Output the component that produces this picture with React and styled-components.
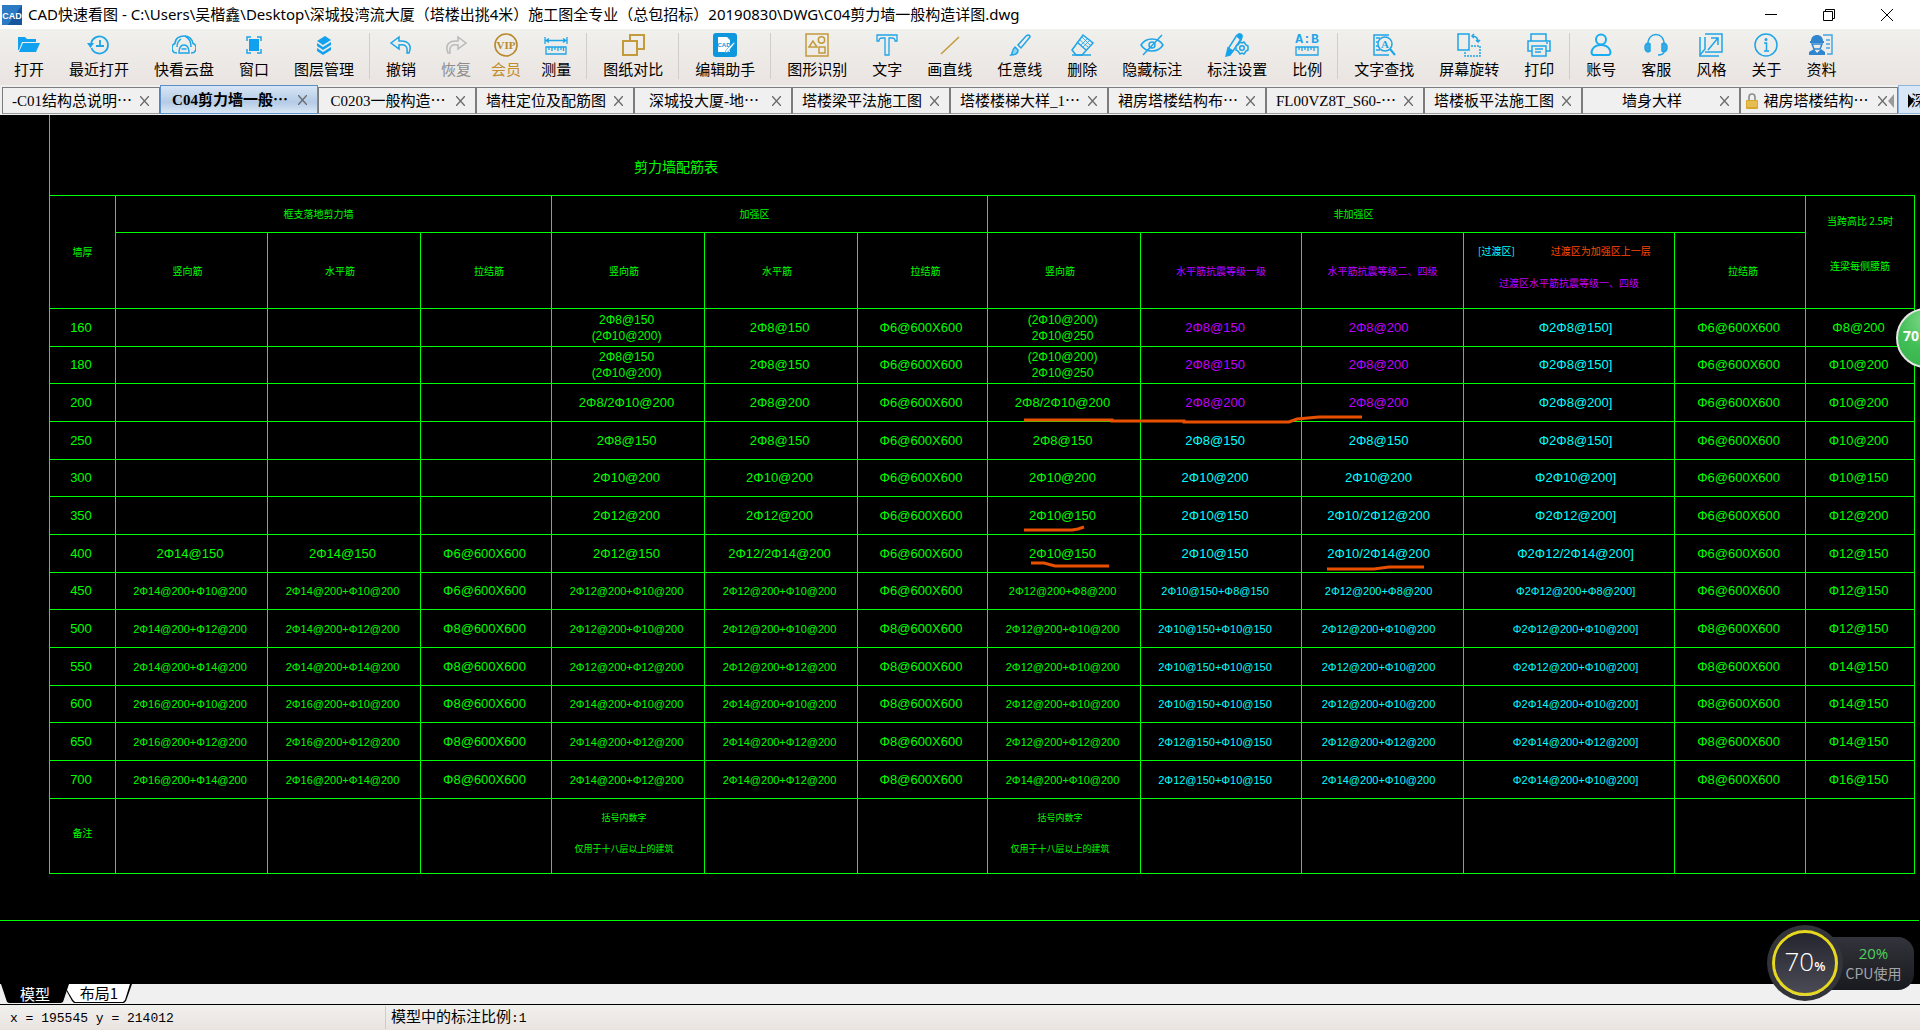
import React, { useState } from 'react'
import styled, { createGlobalStyle, css } from 'styled-components';

const BLUE = '#1ea5e8';
const GOLD = '#c39b3c';
const GREEN = '#00ff00';
const CYAN = '#00ffff';
const PURPLE = '#bf00ff';
const ORANGE = '#ff4800';

const line = { fill: 'none', stroke: BLUE, strokeWidth: 1.5 };

// toolbar drawings, all on a 24 x 24 grid
const icons = {
	open: (
		<g fill="#12a1ee">
			<path d="M1 4h7l2 2h9v3H5L2 17H1z" />
			<path d="M6 10h17l-4 9H2z" />
		</g>
	),
	recent: (
		<g {...line} strokeWidth="1.8">
			<path d="M4.5 15A8.500 8.500 0 1 0 4.200 10" />
			<path d="M13 7v6h-4M13 13h4" />
			<path d="M0 10h7l-3.500 5z" fill={BLUE} stroke="none" />
		</g>
	),
	cloud: (
		<g {...line}>
			<path d="M5 20c-3 0-5-2-5-5 0-2.500 1.500-4 3-4.500C3 5 8 3 12 3c5 0 8 3 9 7.500 2 .5 3 2 3 4.500 0 3-2 5-5 5" />
			<path d="M9 6c-3 2-4 5-4 8M13 3c4 2 6 6 6 11" />
			<path d="M7 20c0-5 2-8 5-8s5 3 5 8zM9.500 16h5" />
		</g>
	),
	window: (
		<g {...line}>
			<path d="M5 8V4h4M15 4h4v4M19 16v4h-4M9 20H5v-4" />
			<rect x="7" y="6" width="10" height="12" fill="#12a1ee" stroke="none" />
		</g>
	),
	layers: (
		<g fill="#12a1ee">
			<path d="M13 3l6 4-8 5-6-4z" />
			<path d="M5 10l6 4 8-5v3l-8 5-6-4z" />
			<path d="M5 15l6 4 8-5v3l-8 5-6-4z" />
		</g>
	),
	undo: <path {...line} d="M10 4L2 10l8 6v-4c6-1 9 1 8 8h2c3-7 0-13-10-12z" />,
	redo: <path {...line} stroke="#b9b9b9" d="M14 4l8 6-8 6v-4c-6-1-9 1-8 8H4c-3-7 0-13 10-12z" />,
	vip: (
		<g>
			<circle cx="12" cy="12" r="11" fill="none" stroke="#b8892c" strokeWidth="1.600" />
			<text x="12" y="16" fontSize="11" fontWeight="700" textAnchor="middle" fill="#b8892c" fontFamily="Liberation Serif, serif">VIP</text>
		</g>
	),
	measure: (
		<g {...line} strokeWidth="1.300">
			<path d="M1 4v7M23 4v7M3 7.500h18M5 5.500l-3 2 3 2M19 5.500l3 2-3 2" />
			<path d="M2 14h20v7H2zM5 14v3M8 14v4M11 14v3M14 14v4M17 14v3M19.500 14v4" />
		</g>
	),
	compare: (
		<g fill="none" stroke={GOLD} strokeWidth="2">
			<path d="M9 8V2h14v14h-7" />
			<path d="M2 8h14v14H2z" />
		</g>
	),
	helper: (
		<g>
			<rect width="24" height="24" rx="3" fill="#0e97dc" />
			<path d="M5 4h9l3 3v12H5z" fill="#fff" />
			<text x="11" y="14" fontSize="6" fontWeight="700" textAnchor="middle" fill="#0e97dc" fontFamily="Liberation Sans, sans-serif">CAD</text>
			<path d="M21 9l1 1-7 9-3 1 1-3z" fill="#fff" stroke="#0e97dc" strokeWidth=".6" />
		</g>
	),
	shapes: (
		<g fill="none" stroke={GOLD} strokeWidth="1.500">
			<path d="M1 1h22v22H1z" />
			<path d="M8 8l-4 6h8z" />
			<circle cx="16.500" cy="7" r="3.200" />
			<path d="M14 14h6v6h-6z" />
		</g>
	),
	text: <path {...line} strokeWidth="1.300" d="M2 2h20v6h-2c0-2-1-3-3-3h-3v17h-4V5H7C5 5 4 6 4 8H2z" />,
	straight: <path d="M3 21L21 4" stroke={GOLD} strokeWidth="1.600" />,
	brush: (
		<g {...line}>
			<path d="M20 2c1 0 2 1 2 2L13 15l-3-3L18 3z" />
			<path d="M7 14l3 3c0 3-2 5-7 5 2-2 1-6 4-8z" fill="#8fd2f4" />
		</g>
	),
	eraser: (
		<g {...line}>
			<path d="M13 2l10 8-11 12H6l-4-5z" />
			<path d="M7 9l9 8M2 22h19" />
			<path d="M12 4l8 8M10 7l8 7M17 6l-6 6M19 8l-6 6" strokeWidth=".8" />
		</g>
	),
	hide: (
		<g {...line}>
			<path d="M1 12c5-8 17-8 22 0-5 8-17 8-22 0z" />
			<circle cx="12" cy="12" r="3" />
			<path d="M3 22L22 2" />
		</g>
	),
	dimension: (
		<g {...line}>
			<path d="M3 16L12 2M8 18l8-12" />
			<path d="M12 3c1-4 6-2 5 1l-1 3zM3 15l5 3-3 4-4 1z" fill="#12a1ee" />
			<path d="M15 9l2 1 2-1 2 3 2 1v4l-2 1-2 3-2-1-2 1-2-3-2-1v-4l2-1z" fill="#edebe8" />
			<circle cx="17" cy="15" r="2.300" />
		</g>
	),
	ratio: (
		<g {...line} strokeWidth="1.300">
			<text x="12" y="10" fontSize="13" fontWeight="700" textAnchor="middle" fill={BLUE} stroke="none" fontFamily="Liberation Mono, monospace">A:B</text>
			<path d="M1 14h22v8H1zM4 14v3M7 14v4M10 14v3M13 14v4M16 14v3M19 14v4" />
		</g>
	),
	find: (
		<g {...line}>
			<path d="M17 2H2v20h15" />
			<path d="M4 5h4M4 9h2M4 13h2M4 17h4" />
			<circle cx="13" cy="11" r="7" />
			<path d="M18 16l5 6" strokeWidth="2" />
			<text x="13" y="15" fontSize="11" fontWeight="700" textAnchor="middle" fill={BLUE} stroke="none" fontFamily="Liberation Serif, serif">A</text>
		</g>
	),
	rotate: (
		<g {...line}>
			<path d="M1 1h11v16H1z" />
			<path d="M15 3c4 0 6 2 6 6M17 1l-2 2 2 2M19 7l2 2 2-2" />
			<path d="M14 13h9v10H8v-4" strokeDasharray="2 1" />
		</g>
	),
	print: (
		<g {...line}>
			<path d="M4 8V1h15v7" />
			<path d="M5 18H1V8h22v10h-4" />
			<path d="M5 13h14v10H5zM8 16h8M8 19h6M19 10h2" />
		</g>
	),
	account: (
		<g {...line} stroke="#17acf3" strokeWidth="2">
			<circle cx="12" cy="6.500" r="5" />
			<path d="M4 22c-3-2-1-10 8-10s11 8 8 10z" />
		</g>
	),
	service: (
		<g {...line}>
			<path d="M4 12C3-2 21-2 20 12" />
			<path d="M4 10c-4 1-4 8 0 9l2-1v-7zM20 10c4 1 4 8 0 9l-2-1v-7z" fill="#3ba9e2" />
			<path d="M20 18c0 3-2 4-6 4" />
		</g>
	),
	style: (
		<g {...line}>
			<path d="M6 1h17v18H6M1 4v19h19" />
			<path d="M6 4v12L1 22" />
			<path d="M9 17L19 5M12 5h7v7" />
		</g>
	),
	about: (
		<g {...line}>
			<circle cx="12" cy="12" r="11" />
			<path d="M10 10h2.500v8M10 18h5" />
			<circle cx="12" cy="6.500" r=".8" fill={BLUE} />
		</g>
	),
	material: (
		<g fill="#2f86cf">
			<path d="M2 8c0-8 12-8 12 0h1v2H1V8z" />
			<path d="M3 11h10l-2 5H5z" fill="none" stroke="#2f86cf" strokeWidth="1.500" />
			<path d="M0 22v-3l5-3 3 4 4-4 4 3v3z" />
			<path d="M14 2h9v19h-5M17 7h4M17 11h4M17 15h4" fill="none" stroke="#45a5e2" strokeWidth="1.500" />
		</g>
	),
};

const toolGroups = [
	[['open', '打开'], ['recent', '最近打开'], ['cloud', '快看云盘'], ['window', '窗口'], ['layers', '图层管理']],
	[['undo', '撤销'], ['redo', '恢复'], ['vip', '会员'], ['measure', '测量']],
	[['compare', '图纸对比']],
	[['helper', '编辑助手']],
	[['shapes', '图形识别'], ['text', '文字'], ['straight', '画直线'], ['brush', '任意线'], ['eraser', '删除'], ['hide', '隐藏标注'], ['dimension', '标注设置'], ['ratio', '比例']],
	[['find', '文字查找'], ['rotate', '屏幕旋转'], ['print', '打印']],
	[['account', '账号'], ['service', '客服'], ['style', '风格'], ['about', '关于'], ['material', '资料']],
];

const files = [
	['-C01结构总说明', true],
	['C04剪力墙一般', true],
	['C0203一般构造', true],
	['墙柱定位及配筋图', false],
	['深城投大厦-地', true],
	['塔楼梁平法施工图', false],
	['塔楼楼梯大样_1', true],
	['裙房塔楼结构布', true],
	['FL00VZ8T_S60-', true],
	['塔楼板平法施工图', false],
	['墙身大样', false],
	['裙房塔楼结构', true],
];

const columns = [66, 152, 153, 131, 153, 153, 130, 153, 161, 162, 211, 131, 109];

// thickness, then one entry for each of the twelve columns
const rows = [
	['160', '', '', '', '2Φ8@150\n(2Φ10@200)', '2Φ8@150', 'Φ6@600X600', '(2Φ10@200)\n2Φ10@250', '2Φ8@150', '2Φ8@200', 'Φ2Φ8@150]', 'Φ6@600X600', 'Φ8@200'],
	['180', '', '', '', '2Φ8@150\n(2Φ10@200)', '2Φ8@150', 'Φ6@600X600', '(2Φ10@200)\n2Φ10@250', '2Φ8@150', '2Φ8@200', 'Φ2Φ8@150]', 'Φ6@600X600', 'Φ10@200'],
	['200', '', '', '', '2Φ8/2Φ10@200', '2Φ8@200', 'Φ6@600X600', '2Φ8/2Φ10@200', '2Φ8@200', '2Φ8@200', 'Φ2Φ8@200]', 'Φ6@600X600', 'Φ10@200'],
	['250', '', '', '', '2Φ8@150', '2Φ8@150', 'Φ6@600X600', '2Φ8@150', '2Φ8@150', '2Φ8@150', 'Φ2Φ8@150]', 'Φ6@600X600', 'Φ10@200'],
	['300', '', '', '', '2Φ10@200', '2Φ10@200', 'Φ6@600X600', '2Φ10@200', '2Φ10@200', '2Φ10@200', 'Φ2Φ10@200]', 'Φ6@600X600', 'Φ10@150'],
	['350', '', '', '', '2Φ12@200', '2Φ12@200', 'Φ6@600X600', '2Φ10@150', '2Φ10@150', '2Φ10/2Φ12@200', 'Φ2Φ12@200]', 'Φ6@600X600', 'Φ12@200'],
	['400', '2Φ14@150', '2Φ14@150', 'Φ6@600X600', '2Φ12@150', '2Φ12/2Φ14@200', 'Φ6@600X600', '2Φ10@150', '2Φ10@150', '2Φ10/2Φ14@200', 'Φ2Φ12/2Φ14@200]', 'Φ6@600X600', 'Φ12@150'],
	['450', '2Φ14@200+Φ10@200', '2Φ14@200+Φ10@200', 'Φ6@600X600', '2Φ12@200+Φ10@200', '2Φ12@200+Φ10@200', 'Φ6@600X600', '2Φ12@200+Φ8@200', '2Φ10@150+Φ8@150', '2Φ12@200+Φ8@200', 'Φ2Φ12@200+Φ8@200]', 'Φ6@600X600', 'Φ12@150'],
	['500', '2Φ14@200+Φ12@200', '2Φ14@200+Φ12@200', 'Φ8@600X600', '2Φ12@200+Φ10@200', '2Φ12@200+Φ10@200', 'Φ8@600X600', '2Φ12@200+Φ10@200', '2Φ10@150+Φ10@150', '2Φ12@200+Φ10@200', 'Φ2Φ12@200+Φ10@200]', 'Φ8@600X600', 'Φ12@150'],
	['550', '2Φ14@200+Φ14@200', '2Φ14@200+Φ14@200', 'Φ8@600X600', '2Φ12@200+Φ12@200', '2Φ12@200+Φ12@200', 'Φ8@600X600', '2Φ12@200+Φ10@200', '2Φ10@150+Φ10@150', '2Φ12@200+Φ10@200', 'Φ2Φ12@200+Φ10@200]', 'Φ8@600X600', 'Φ14@150'],
	['600', '2Φ16@200+Φ10@200', '2Φ16@200+Φ10@200', 'Φ8@600X600', '2Φ14@200+Φ10@200', '2Φ14@200+Φ10@200', 'Φ8@600X600', '2Φ12@200+Φ10@200', '2Φ10@150+Φ10@150', '2Φ12@200+Φ10@200', 'Φ2Φ14@200+Φ10@200]', 'Φ8@600X600', 'Φ14@150'],
	['650', '2Φ16@200+Φ12@200', '2Φ16@200+Φ12@200', 'Φ8@600X600', '2Φ14@200+Φ12@200', '2Φ14@200+Φ12@200', 'Φ8@600X600', '2Φ12@200+Φ12@200', '2Φ12@150+Φ10@150', '2Φ12@200+Φ12@200', 'Φ2Φ14@200+Φ12@200]', 'Φ8@600X600', 'Φ14@150'],
	['700', '2Φ16@200+Φ14@200', '2Φ16@200+Φ14@200', 'Φ8@600X600', '2Φ14@200+Φ12@200', '2Φ14@200+Φ12@200', 'Φ8@600X600', '2Φ14@200+Φ10@200', '2Φ12@150+Φ10@150', '2Φ14@200+Φ10@200', 'Φ2Φ14@200+Φ10@200]', 'Φ8@600X600', 'Φ16@150'],
];

const note = '括号内数字\n仅用于十八层以上的建筑';
const notes = ['', '', '', note, '', '', note, '', '', '', '', ''];

function cellColor(row, col) {
	if(col === 10) return CYAN;
	if(col === 8 || col === 9) return row < 3 ? PURPLE : CYAN;
	return GREEN;
}

function cellSize(value) {
	if(value.includes('+')) return 'long';
	if(value.includes('\n')) return 'double';
	return 'normal';
}

const App = () => {
	const [active, setActive] = useState(1);

	return (
		<Window lang="zh-CN">
			<GlobalStyle />
			<TitleBar>
				<Logo viewBox="0 0 20 20" aria-hidden="true">
					<rect width="20" height="20" fill="#16569c" />
					<path d="M0 0h20L6 20H0z" fill="#2c79c4" />
					<text x="10" y="14" fontSize="9" fontWeight="700" textAnchor="middle" fill="#fff" fontFamily="Liberation Sans, sans-serif">CAD</text>
				</Logo>
				<Title>CAD快速看图 - C:\Users\吴楷鑫\Desktop\深城投湾流大厦（塔楼出挑4米）施工图全专业（总包招标）20190830\DWG\C04剪力墙一般构造详图.dwg</Title>
				<WindowButton aria-label="最小化">
					<svg width="12" height="12"><path d="M0 5.500h12" stroke="#000" /></svg>
				</WindowButton>
				<WindowButton aria-label="还原">
					<svg width="12" height="12" fill="none" stroke="#000"><path d="M.5 2.500h9v9h-9zM2.500 2.500v-2h9v9h-2" /></svg>
				</WindowButton>
				<WindowButton aria-label="关闭">
					<svg width="12" height="12" stroke="#000"><path d="M0 0l12 12M12 0L0 12" /></svg>
				</WindowButton>
			</TitleBar>

			<Toolbar>
				{toolGroups.map((group, index) => (
					<ToolGroup key={index}>
						{group.map(([name, label]) => (
							<Tool key={name} $vip={name === 'vip'} $muted={name === 'redo'}>
								<svg width="24" height="24" viewBox="0 0 24 24" aria-hidden="true">{icons[name]}</svg>
								<span>{label}</span>
							</Tool>
						))}
					</ToolGroup>
				))}
			</Toolbar>

			<FileTabs>
				{files.map(([name, cut], index) => (
					<FileTab key={name} $active={index === active}>
						{index === 11 && (
							<Lock viewBox="0 0 12 16" aria-hidden="true">
								<path d="M3 8V4c0-4 6-4 6 0v4" fill="none" stroke="#8d8d8d" strokeWidth="1.600" />
								<rect x="0" y="7" width="12" height="9" rx="1" fill="#d9a62e" />
								<path d="M1 9h10M1 11h10M1 13h10" stroke="#f3d27a" />
							</Lock>
						)}
						<FileName onClick={() => setActive(index)}>{name}{cut && <Dots>…</Dots>}</FileName>
						<CloseTab aria-label="关闭标签">
							<svg width="9" height="10" fill="none" stroke="#6b6b6b" strokeWidth="1.400"><path d="M0 0l9 10M9 0L0 10" /></svg>
						</CloseTab>
					</FileTab>
				))}
				<NextTab>深</NextTab>
				<Scroller>
					<ScrollButton aria-label="向左"><svg width="6" height="14"><path d="M6 0v14L0 7z" fill="#9a9a9a" /></svg></ScrollButton>
					<ScrollButton aria-label="向右"><svg width="6" height="14"><path d="M0 0v14l6-7z" fill="#000" /></svg></ScrollButton>
				</Scroller>
			</FileTabs>

			<Canvas>
				<Sheet>
					<SheetTitle>剪力墙配筋表</SheetTitle>
					<Schedule>
						<colgroup>
							{columns.map((width, index) => <col key={index} width={width} />)}
						</colgroup>
						<thead>
							<GroupRow>
								<Head rowSpan={2}>墙厚</Head>
								<Head colSpan={3} $right={30}>框支落地剪力墙</Head>
								<Head colSpan={3} $right={30}>加强区</Head>
								<Head colSpan={5} $right={86}>非加强区</Head>
								<Head rowSpan={2} $bottom={18} $leading={45}>{'当跨高比 2.5时\n连梁每侧腰筋'}</Head>
							</GroupRow>
							<HeadRow>
								<Head $right={8}>竖向筋</Head>
								<Head $right={8}>水平筋</Head>
								<Head $left={6}>拉结筋</Head>
								<Head $right={8}>竖向筋</Head>
								<Head $right={8}>水平筋</Head>
								<Head $left={6}>拉结筋</Head>
								<Head $right={8}>竖向筋</Head>
								<Head $color={PURPLE}>水平筋抗震等级一级</Head>
								<Head $color={PURPLE}>水平筋抗震等级二、四级</Head>
								<Head $color={PURPLE} $bottom={8} $leading={32}>
									<Zone>
										<ZoneTag>[过渡区]</ZoneTag>
										<ZoneHint>过渡区为加强区上一层</ZoneHint>
									</Zone>
									过渡区水平筋抗震等级一、四级
								</Head>
								<Head $left={6}>拉结筋</Head>
							</HeadRow>
						</thead>
						<tbody>
							{rows.map((row, r) => (
								<BarRow key={row[0]}>
									{row.map((value, c) => (
										<Cell key={c} $color={cellColor(r, c)} $size={cellSize(value)} $col={c}>
											{value}
										</Cell>
									))}
								</BarRow>
							))}
							<NoteRow>
								<Head $bottom={6}>备注</Head>
								{notes.map((value, index) => (
									<Note key={index}>{value}</Note>
								))}
							</NoteRow>
						</tbody>
					</Schedule>
				</Sheet>
				<Frame />
				<Marks aria-hidden="true">
					<path d="M1024 305h88v1h72v1h105l8-3l22-2h43" />
					<path d="M1024 415h48l6-1l6-2" />
					<path d="M1031 448h13l11 3h54" />
					<path d="M1327 454h47l15-2h35" />
				</Marks>
				<Ball>70</Ball>
			</Canvas>

			<LayoutTabs>
				<ModelTab>模型</ModelTab>
				<LayoutTab><span>布局1</span></LayoutTab>
			</LayoutTabs>
			<StatusBar>
				<Position>x = 195545 y = 214012</Position>
				<Scale>模型中的标注比例<b>:1</b></Scale>
			</StatusBar>

			<Monitor>
				<Gauge>70<small>%</small></Gauge>
				<Usage>
					<strong>20%</strong>
					<span>CPU使用</span>
				</Usage>
			</Monitor>
		</Window>
	);
};

const GlobalStyle = createGlobalStyle`
	* {
		box-sizing: border-box;
	}

	body {
		margin: 0;
		background: #000;
		font-family: "Noto Sans CJK SC", sans-serif;
		font-size: 15px;
		color: #000;
		overflow: hidden;
	}

	button {
		border: 0;
		padding: 0;
		background: none;
		font: inherit;
		color: inherit;
	}

	svg {
		display: block;
		flex: none;
	}
`;

const Window = styled.div`
	position: relative;
	display: flex;
	flex-direction: column;
	min-height: 100vh;
`;

const TitleBar = styled.header`
	display: flex;
	align-items: center;
	height: 29px;
	padding: 0 4px 0 2px;
	background: #fff;
`;

const Logo = styled.svg`
	width: 20px;
	height: 20px;
	margin-right: 6px;
`;

const Title = styled.h1`
	flex: 1;
	margin: 0;
	font-family: "Noto Sans", "Noto Sans CJK SC", sans-serif;
	font-size: 15px;
	font-weight: 400;
	line-height: 29px;
	white-space: nowrap;
`;

const WindowButton = styled.button`
	display: flex;
	align-items: center;
	justify-content: center;
	width: 58px;
	height: 29px;
`;

const Toolbar = styled.nav`
	display: flex;
	align-items: center;
	height: 56px;
	padding: 0 0 2px 1px;
	background: linear-gradient(#f0f0ec, #eae4e1);
`;

const ToolGroup = styled.div`
	display: flex;

	& + & {
		margin-left: 3px;
		padding-left: 3px;
		border-left: 1px solid #d0cecc;
	}
`;

const Tool = styled.button`
	display: flex;
	flex-direction: column;
	align-items: center;
	justify-content: space-between;
	height: 46px;
	padding: 0 ${props => props.$vip ? 7 : 12}px 0 ${props => props.$vip ? 8 : 13}px;
	line-height: 20px;
	color: ${props => props.$vip ? '#c08c2c' : props.$muted ? '#8c8c8c' : '#000'};
`;

const FileTabs = styled.div`
	position: relative;
	display: flex;
	align-items: flex-end;
	height: 30px;
	padding: 0 0 1px 2px;
	background: #f0f0f0;
	overflow: hidden;
`;

const FileTab = styled.div`
	display: flex;
	align-items: center;
	flex: none;
	width: 158px;
	height: 27px;
	padding: 0 10px 0 5px;
	border: 1px solid #7c7c7c;
	border-bottom-color: #9a9a9a;
	background: #f0f0f0;
	font-family: "Liberation Serif", "Noto Sans CJK SC", serif;

	${props => props.$active && css`
		height: 29px;
		border-color: #5b8fc9;
		background: linear-gradient(#d8e6f5, #b4cbe6 60%, #dbe8f5);
		font-weight: 700;
	`}
`;

const FileName = styled.button`
	flex: 1;
	line-height: 24px;
	white-space: nowrap;
`;

const Dots = styled.span`
	display: inline-block;
	font-family: "Noto Sans CJK SC", sans-serif;
`;

const CloseTab = styled.button`
	padding: 2px 0 2px 4px;
`;

const Lock = styled.svg`
	width: 12px;
	height: 16px;
`;

const NextTab = styled.button`
	flex: none;
	width: 158px;
	height: 29px;
	padding-left: 12px;
	border: 1px solid #8fb4dc;
	background: #d8e6f5;
	text-align: left;
`;

const Scroller = styled.div`
	position: absolute;
	right: 6px;
	top: 9px;
	display: flex;
	gap: 14px;
`;

const ScrollButton = styled.button`
	display: block;
`;

const Canvas = styled.main`
	position: relative;
	flex: 1;
	background: #000;
	color: ${GREEN};
	overflow: hidden;
`;

const Sheet = styled.section`
	margin: 0 5px 0 49px;
`;

const SheetTitle = styled.h2`
	height: 80px;
	margin: 0;
	padding: 39px 0 0 584px;
	border-left: 1px solid ${GREEN};
	font-size: 14px;
	font-weight: 400;
	line-height: 24px;
`;

const Schedule = styled.table`
	width: 100%;
	table-layout: fixed;
	border-collapse: collapse;
`;

const GroupRow = styled.tr`
	height: 37px;
`;

const HeadRow = styled.tr`
	height: 76px;
`;

const BarRow = styled.tr`
	height: 38px;

	&:nth-child(3n + 2) {
		height: 37px;
	}
`;

const NoteRow = styled.tr`
	height: 75px;
`;

const Head = styled.th`
	padding: 0 ${props => props.$right || 0}px ${props => props.$bottom || 0}px ${props => props.$left || 0}px;
	border: 1px solid ${GREEN};
	color: ${props => props.$color || GREEN};
	font-size: 10px;
	font-weight: 400;
	line-height: ${props => props.$leading || 18}px;
	white-space: pre-line;
`;

const Zone = styled.div`
	display: flex;
	gap: 36px;
	padding-left: 14px;
`;

const ZoneTag = styled.span`
	color: ${CYAN};
`;

const ZoneHint = styled.span`
	color: ${ORANGE};
`;

const cellSizes = {
	normal: css`
		font-size: 13px;
		line-height: 18px;
	`,
	double: css`
		font-size: 12px;
		line-height: 16px;
	`,
	long: css`
		font-size: 11px;
		line-height: 18px;
	`,
};

const Cell = styled.td`
	padding: 0 3px 0 0;
	border: 1px solid ${GREEN};
	color: ${props => props.$color};
	font-family: "Liberation Sans", sans-serif;
	text-align: center;
	white-space: pre-line;
	${props => cellSizes[props.$size]}
	${props => props.$col === 8 && 'padding-right: 12px;'}
	${props => props.$col === 9 && 'padding-right: 8px;'}
	${props => props.$col === 10 && 'padding-left: 16px;'}
`;

const Note = styled.td`
	padding: 0 8px 6px 0;
	border: 1px solid ${GREEN};
	font-size: 9px;
	line-height: 31px;
	text-align: center;
	white-space: pre-line;
`;

const Frame = styled.div`
	height: 47px;
	margin-right: 1px;
	border-bottom: 1px solid ${GREEN};
`;

const Marks = styled.svg`
	position: absolute;
	left: 0;
	top: 0;
	width: 100%;
	height: 100%;
	fill: none;
	stroke: #e85000;
	stroke-width: 3px;
	pointer-events: none;
`;

const Ball = styled.div`
	position: absolute;
	right: -36px;
	top: 193px;
	width: 60px;
	height: 60px;
	padding-left: 5px;
	border: 2px solid #e6e6e6;
	border-radius: 50%;
	background: radial-gradient(circle at 50% 20%, #7fd88a, #43bf57 50%, #35b04a);
	color: #fff;
	font-family: "Open Sans", sans-serif;
	font-size: 14px;
	font-weight: 700;
	line-height: 52px;
`;

const LayoutTabs = styled.div`
	display: flex;
	height: 21px;
	padding-left: 1px;
	border-bottom: 1px solid #000;
	background: #f0f0f0;
	line-height: 19px;
`;

const ModelTab = styled.button`
	width: 68px;
	height: 19px;
	background: #000;
	color: #fff;
	clip-path: polygon(0 0, 68px 0, 62px 18px, 60px 19px, 8px 19px, 6px 18px);
`;

const LayoutTab = styled.button`
	width: 66px;
	height: 19px;
	margin-left: -3px;
	padding: 0 1px 1px;
	background: #000;
	clip-path: polygon(2px 0, 66px 0, 60px 17px, 58px 19px, 8px 19px, 6px 17px, 0 6px);

	span {
		display: block;
		height: 18px;
		background: #fff;
		line-height: 18px;
		clip-path: polygon(2px 0, 63px 0, 58px 16px, 56px 18px, 8px 18px, 6px 16px, 0 6px);
	}
`;

const StatusBar = styled.footer`
	display: flex;
	align-items: center;
	height: 25px;
	background: linear-gradient(#f0f0ec, #eae4e1);
`;

const Position = styled.div`
	width: 385px;
	padding: 2px 0 0 10px;
	font-family: "Liberation Mono", monospace;
	font-size: 13px;
`;

const Scale = styled.div`
	padding-left: 5px;
	border-left: 1px solid #cfcdcb;
	line-height: 20px;

	b {
		font-family: "Liberation Mono", monospace;
		font-size: 13px;
		font-weight: 400;
	}
`;

const Monitor = styled.aside`
	position: absolute;
	right: 6px;
	bottom: 29px;
	display: flex;
	align-items: center;
`;

const Gauge = styled.div`
	position: relative;
	z-index: 1;
	display: flex;
	align-items: baseline;
	justify-content: center;
	width: 66px;
	height: 66px;
	margin: 5px;
	border: 3px solid #e6d720;
	border-radius: 50%;
	background: linear-gradient(#24252e, #4a4b54);
	box-shadow: 0 0 0 5px #33343b;
	color: #fff;
	font-family: "Open Sans", sans-serif;
	font-size: 26px;
	font-weight: 300;
	line-height: 56px;

	small {
		font-size: 13px;
		font-weight: 600;
	}
`;

const Usage = styled.div`
	display: flex;
	flex-direction: column;
	align-items: center;
	width: 105px;
	height: 53px;
	margin-left: -34px;
	padding: 6px 0 0 24px;
	border-radius: 0 16px 16px 0;
	background: linear-gradient(#33343b, #191a1f);
	line-height: 20px;

	strong {
		color: #4fd15c;
		font-family: "Open Sans", sans-serif;
		font-size: 15px;
		font-weight: 400;
	}

	span {
		color: #a3a3a8;
		font-size: 14px;
	}
`;

export default App;
